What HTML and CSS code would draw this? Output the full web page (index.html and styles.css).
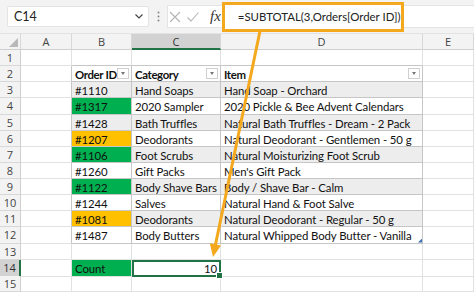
FILE: index.html
```html
<!DOCTYPE html>
<html lang="en">
  <head>
    <meta charset="UTF-8" />
    <meta name="viewport" content="width=device-width, initial-scale=1.0" />
    <title>SUBTOTAL count</title>
    <link rel="stylesheet" href="styles.css">
  </head>
  <body>
    <div class="formula-bar">
      <div class="name-box">
        <span>C14</span>
        <svg class="chevron" width="8" height="5" viewBox="0 0 8 5"><polyline points="0.5,0.5 4,4 7.5,0.5" fill="none" stroke="#444" stroke-width="1.2"/></svg>
      </div>
      <svg class="dots" width="3" height="11" viewBox="0 0 3 11"><circle cx="1.5" cy="1.5" r="1" fill="#888"/><circle cx="1.5" cy="5.5" r="1" fill="#888"/><circle cx="1.5" cy="9.5" r="1" fill="#888"/></svg>
      <div class="fx-area">
        <svg class="tool" width="12" height="12" viewBox="0 0 12 12"><path d="M1 1 L11 11 M11 1 L1 11" stroke="#b4b4b4" stroke-width="1.1"/></svg>
        <svg class="tool" width="12" height="12" viewBox="0 0 12 12"><path d="M0.5 6.5 L4 10 L11.5 1.5" fill="none" stroke="#b4b4b4" stroke-width="1.1"/></svg>
        <span class="fx">fx</span>
        <div class="formula">=SUBTOTAL(3,Orders[Order ID])</div>
      </div>
    </div>

    <div class="sheet">
      <div class="row heads">
        <div class="corner"><span class="tri"></span></div>
        <div class="ch">A</div><div class="ch">B</div><div class="ch sel">C</div><div class="ch">D</div><div class="ch">E</div>
      </div>
      <div class="row">
        <div class="rh">1</div><div class="c"></div><div class="c above"></div><div class="c above"></div><div class="c above"></div><div class="c"></div>
      </div>
      <div class="row">
        <div class="rh">2</div><div class="c before"></div>
        <div class="c t th">Order ID<span class="drop"></span></div>
        <div class="c t th">Category<span class="drop"></span></div>
        <div class="c t th">Item<span class="drop"></span></div>
        <div class="c"></div>
      </div>
      <div class="row">
        <div class="rh">3</div><div class="c before"></div>
        <div class="c t band">#1110</div><div class="c t band">Hand Soaps</div><div class="c t band">Hand Soap - Orchard</div><div class="c"></div>
      </div>
      <div class="row">
        <div class="rh">4</div><div class="c before"></div>
        <div class="c t green">#1317</div><div class="c t">2020 Sampler</div><div class="c t">2020 Pickle &amp; Bee Advent Calendars</div><div class="c"></div>
      </div>
      <div class="row">
        <div class="rh">5</div><div class="c before"></div>
        <div class="c t band">#1428</div><div class="c t band">Bath Truffles</div><div class="c t band">Natural Bath Truffles - Dream - 2 Pack</div><div class="c"></div>
      </div>
      <div class="row">
        <div class="rh">6</div><div class="c before"></div>
        <div class="c t orange">#1207</div><div class="c t">Deodorants</div><div class="c t">Natural Deodorant - Gentlemen - 50 g</div><div class="c"></div>
      </div>
      <div class="row">
        <div class="rh">7</div><div class="c before"></div>
        <div class="c t green">#1106</div><div class="c t band">Foot Scrubs</div><div class="c t band">Natural Moisturizing Foot Scrub</div><div class="c"></div>
      </div>
      <div class="row">
        <div class="rh">8</div><div class="c before"></div>
        <div class="c t">#1260</div><div class="c t">Gift Packs</div><div class="c t">Men's Gift Pack</div><div class="c"></div>
      </div>
      <div class="row">
        <div class="rh">9</div><div class="c before"></div>
        <div class="c t green">#1122</div><div class="c t band">Body Shave Bars</div><div class="c t band">Body / Shave Bar - Calm</div><div class="c"></div>
      </div>
      <div class="row">
        <div class="rh">10</div><div class="c before"></div>
        <div class="c t">#1244</div><div class="c t">Salves</div><div class="c t">Natural Hand &amp; Foot Salve</div><div class="c"></div>
      </div>
      <div class="row">
        <div class="rh">11</div><div class="c before"></div>
        <div class="c t orange">#1081</div><div class="c t band">Deodorants</div><div class="c t band">Natural Deodorant - Regular - 50 g</div><div class="c"></div>
      </div>
      <div class="row">
        <div class="rh">12</div><div class="c before"></div>
        <div class="c t">#1487</div><div class="c t">Body Butters</div><div class="c t last">Natural Whipped Body Butter - Vanilla<span class="resize"></span></div><div class="c"></div>
      </div>
      <div class="row">
        <div class="rh">13</div><div class="c"></div><div class="c"></div><div class="c"></div><div class="c"></div><div class="c"></div>
      </div>
      <div class="row">
        <div class="rh sel">14</div><div class="c"></div><div class="c green">Count</div><div class="c num active">10<span class="handle"></span></div><div class="c"></div><div class="c"></div>
      </div>
      <div class="row">
        <div class="rh">15</div><div class="c"></div><div class="c"></div><div class="c"></div><div class="c"></div><div class="c"></div>
      </div>
    </div>

    <!-- callout arrow from the formula to the result -->
    <svg class="callout" width="474" height="292" viewBox="0 0 474 292">
      <line x1="260" y1="31" x2="215.4" y2="245" stroke="#f4a81d" stroke-width="3"/>
      <polygon points="213,257 221,245.5 209.8,243.2" fill="#f4a81d"/>
    </svg>
  </body>
</html>
```

FILE: styles.css
```css
body {
  margin: 0;
  width: 474px;
  height: 292px;
  overflow: hidden;
  position: relative;
  background-color: white;
  font-family: Lato, "Liberation Sans", sans-serif;
  color: #111;
}
.formula-bar {
  height: 34px;
  display: flex;
  align-items: center;
  background-color: #f3f3f3;
  box-sizing: border-box;
  border-bottom: 1px solid #e2e2e2;
}
.name-box {
  margin-left: 7px;
  width: 142px;
  height: 21px;
  box-sizing: border-box;
  padding: 0 5px 0 6px;
  display: flex;
  align-items: center;
  justify-content: space-between;
  background-color: white;
  border: 1px solid #e4e4e4;
  border-radius: 2px;
  font-family: Lato, sans-serif;
  font-size: 12.5px;
  color: #222;
}
.dots {
  margin: 0 7px 0 8px;
}
.fx-area {
  flex: 1;
  height: 21px;
  display: flex;
  align-items: center;
  background-color: white;
  border: 1px solid #e4e4e4;
  border-right: none;
}
.tool {
  margin-left: 1px;
  margin-right: 1px;
}
.tool + .tool {
  margin-left: 5px;
}
.fx {
  margin-left: 10px;
  font-family: "Liberation Serif", serif;
  font-style: italic;
  font-size: 15px;
  color: #333;
}
.formula {
  margin-left: 1px;
  width: 182px;
  height: 30px;
  box-sizing: border-box;
  border: 3px solid #f4a81d;
  background-color: white;
  padding-left: 13px;
  display: flex;
  align-items: center;
  white-space: nowrap;
  font-family: Lato, sans-serif;
  font-size: 11.4px;
  color: #222;
}
.row {
  display: grid;
  grid-template-columns: 21px 51px 60px 89px 202px 1fr;
  height: 16.13px;
}
.row.heads {
  height: 16px;
}
.row > div {
  box-sizing: border-box;
  border-right: 1px solid #e1e1e1;
  border-bottom: 1px solid #e1e1e1;
  position: relative;
  white-space: nowrap;
  overflow: hidden;
}
.ch, .rh, .corner {
  background-color: #f3f3f3;
  font-family: "Open Sans", sans-serif;
  font-size: 11px;
  color: #444;
  display: flex;
  align-items: center;
  justify-content: center;
}
.row > .ch, .row > .corner {
  border-right-color: #d8d8d8;
  border-bottom-color: #cfcfcf;
}
.row > .rh {
  border-right-color: #cfcfcf;
  border-bottom-color: #d8d8d8;
}
.ch.sel, .rh.sel {
  background-color: #d2d2d2;
  color: #333;
}
.row > .ch.sel {
  border-bottom: 2px solid #217346;
}
.row > .rh.sel {
  border-right: 2px solid #217346;
}
.tri {
  position: absolute;
  right: 2px;
  bottom: 2px;
  width: 9px;
  height: 9px;
  background-color: #b8b8b8;
  clip-path: polygon(100% 0, 100% 100%, 0 100%);
}
.c {
  font-size: 11.4px;
  letter-spacing: -0.1px;
  line-height: 15px;
  padding-left: 3px;
  padding-top: 1px;
}
.row > .t,
.row > .above {
  border-bottom-color: #c6c6c6;
}
.row > .t,
.row > .before {
  border-right-color: #c6c6c6;
}
.th {
  font-weight: bold;
  letter-spacing: -0.35px;
  background-color: white;
}
.band {
  background-color: #ededed;
}
.green {
  background-color: #00b050;
}
.orange {
  background-color: #ffc000;
}
.drop {
  position: absolute;
  right: 2px;
  top: 2px;
  width: 12px;
  height: 11px;
  box-sizing: border-box;
  background-color: white;
  border: 1px solid #d0d0d0;
}
.drop::after {
  content: "";
  position: absolute;
  left: 3px;
  top: 3px;
  border-left: 2.5px solid transparent;
  border-right: 2.5px solid transparent;
  border-top: 3px solid #777;
}
.resize {
  position: absolute;
  right: 0;
  bottom: 0;
  width: 4px;
  height: 4px;
  background-color: #3b6fb6;
  clip-path: polygon(100% 0, 100% 100%, 0 100%);
}
.num {
  text-align: right;
  padding-right: 3px;
}
.row > .active {
  overflow: visible;
  outline: 2px solid #217346;
  outline-offset: -2px;
  z-index: 1;
}
.handle {
  position: absolute;
  right: -3px;
  bottom: -3px;
  width: 5px;
  height: 5px;
  background-color: #217346;
  border: 1px solid white;
}
.callout {
  position: absolute;
  left: 0;
  top: 0;
  pointer-events: none;
}
```
